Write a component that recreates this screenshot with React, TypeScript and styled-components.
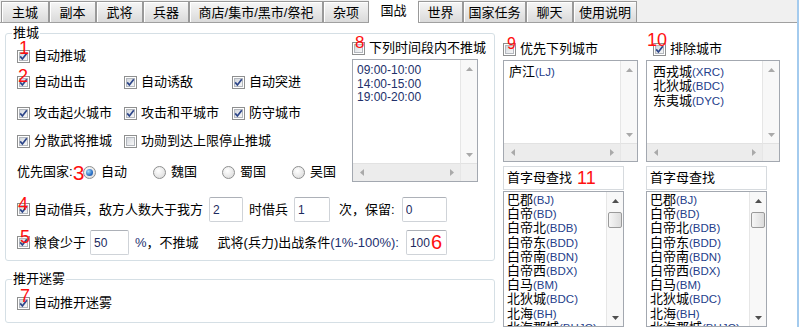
import React from "react";
import styled, { createGlobalStyle } from "styled-components";

const GlobalStyle = createGlobalStyle`
  * { box-sizing: border-box; }
  html, body { margin: 0; padding: 0; background: #fff; }
  body {
    font-family: "Liberation Sans", "Noto Sans CJK SC", sans-serif;
    font-size: 13px;
    color: #000;
  }
`;

const Window = styled.div`
  width: 799px;
  height: 327px;
  overflow: hidden;
  display: flex;
  flex-direction: column;
  border-right: 2px solid #a4cbee;
  background: #fff;
`;

const TabStrip = styled.div`
  display: flex;
  align-items: flex-start;
  flex-shrink: 0;
  height: 23px;
  padding-left: 1px;
  background: #f0f0f0;
  border-bottom: 1px solid #a0a0a0;
`;

const Tab = styled.div<{ $w: number; $active?: boolean }>`
  width: ${(p) => p.$w}px;
  flex-shrink: 0;
  text-align: center;
  line-height: 18px;
  white-space: nowrap;
  ${(p) =>
    p.$active
      ? `
    height: 23px;
    padding-top: 2px;
    background: #fff;
  `
      : `
    height: 21px;
    margin-top: 1px;
    padding-top: 2px;
    border: 1px solid #999;
    border-bottom: none;
    background: linear-gradient(#f6f6f6, #e8e8e8 50%, #dadada);
    box-shadow: inset 1px 1px 0 #fff;
  `}
`;

const Main = styled.div`
  display: flex;
  flex: 1;
  min-height: 0;
  padding-left: 5px;
  gap: 8px;
`;

const LeftCol = styled.div`
  width: 490px;
  flex-shrink: 0;
  padding-top: 2px;
  display: flex;
  flex-direction: column;
`;

const GroupBox = styled.fieldset<{ $h: number; $mt?: number }>`
  margin: ${(p) => p.$mt ?? 0}px 0 0;
  padding: 0;
  min-width: 0;
  height: ${(p) => p.$h}px;
  border: 1px solid #d5dfe5;
  border-radius: 3px;
`;

const Legend = styled.legend`
  margin-left: 6px;
  padding: 0 1px;
  line-height: 16px;
`;

const GroupInner = styled.div`
  padding-left: 11px;
`;

const TopArea = styled.div`
  display: flex;
  align-items: flex-start;
  height: 142px;
`;

const OptionsCol = styled.div`
  width: 335px;
  flex-shrink: 0;
  display: flex;
  flex-direction: column;
`;

const TimePanel = styled.div`
  display: flex;
  flex-direction: column;
`;

const Row = styled.div<{ $mt: number; $h?: number; $pl?: number }>`
  display: flex;
  align-items: center;
  height: ${(p) => p.$h ?? 16}px;
  margin-top: ${(p) => p.$mt}px;
  padding-left: ${(p) => p.$pl ?? 0}px;
  line-height: 16px;
  white-space: nowrap;
`;

const Cell = styled.div<{ $w: number }>`
  width: ${(p) => p.$w}px;
  flex-shrink: 0;
  display: flex;
  align-items: center;
`;

const Text = styled.span<{ $ml?: number }>`
  margin-left: ${(p) => p.$ml ?? 4}px;
`;

const Latin = styled.span`
  color: #1d2f6f;
`;

const BoxOuter = styled.span`
  position: relative;
  flex-shrink: 0;
  width: 13px;
  height: 13px;
  border: 1px solid #8e8f8f;
  background: #fff;
  display: inline-flex;
  align-items: center;
  justify-content: center;
`;

const BoxInner = styled.span`
  width: 9px;
  height: 9px;
  border: 1px solid #b3b7bd;
  background: linear-gradient(135deg, #d4d8de, #f7f7f7);
`;

const Tick = styled.svg`
  position: absolute;
  left: -1px;
  top: -1px;
`;

const RedMark = styled.span<{ $size: number; $float?: boolean; $x?: number; $y?: number }>`
  font-family: "Liberation Sans", sans-serif;
  color: #ff1010;
  font-size: ${(p) => p.$size}px;
  line-height: 1;
  ${(p) =>
    p.$float
      ? `position: absolute; left: ${p.$x}px; top: ${p.$y}px; z-index: 2;`
      : ""}
`;

const RadioDot = styled.span<{ $on?: boolean }>`
  flex-shrink: 0;
  width: 13px;
  height: 13px;
  border-radius: 50%;
  border: 1px solid #8e8f8f;
  background: radial-gradient(circle at 40% 35%, #fff, #d6d6d6);
  display: inline-flex;
  align-items: center;
  justify-content: center;
  &::after {
    content: "";
    display: ${(p) => (p.$on ? "block" : "none")};
    width: 7px;
    height: 7px;
    border-radius: 50%;
    background: radial-gradient(circle at 35% 35%, #a6dcfc, #2a6fc4 60%, #174a95);
  }
`;

const Field = styled.input<{ $w: number; $ml: number }>`
  width: ${(p) => p.$w}px;
  height: 25px;
  margin: 0 0 0 ${(p) => p.$ml}px;
  padding: 0 3px;
  border: 1px solid #cfd3d8;
  border-top-color: #adb1b8;
  border-radius: 2px;
  background: #fff;
  font-family: "Liberation Sans", sans-serif;
  font-size: 12px;
  color: #1c2a5e;
  outline: none;
`;

const FieldWrap = styled.span<{ $ml: number }>`
  position: relative;
  display: inline-flex;
  margin-left: ${(p) => p.$ml}px;
`;

const SideCol = styled.div<{ $w: number }>`
  width: ${(p) => p.$w}px;
  flex-shrink: 0;
  display: flex;
  flex-direction: column;
`;

const ListFrame = styled.div<{ $w: number; $h: number; $mt: number; $hs?: boolean }>`
  width: ${(p) => p.$w}px;
  height: ${(p) => p.$h}px;
  margin-top: ${(p) => p.$mt}px;
  flex-shrink: 0;
  border: 1px solid #a3a8b0;
  background: #fff;
  display: grid;
  grid-template-columns: minmax(0, 1fr) 17px;
  grid-template-rows: ${(p) => (p.$hs ? "minmax(0, 1fr) 18px" : "minmax(0, 1fr)")};
  overflow: hidden;
`;

const ListItems = styled.div<{ $pt: number; $pl: number; $lh: number }>`
  padding: ${(p) => p.$pt}px 0 0 ${(p) => p.$pl}px;
  line-height: ${(p) => p.$lh}px;
  overflow: hidden;
  white-space: nowrap;
`;

const Item = styled.div``;

const TimeItem = styled.div`
  font-size: 12px;
  color: #22306a;
`;

const Code = styled.span`
  font-size: 11.5px;
  color: #24408a;
`;

const VBar = styled.div`
  display: flex;
  flex-direction: column;
  background: #f8f8f8;
  border-left: 1px solid #e6e6e6;
`;

const ArrowBtn = styled.div<{ $wide?: boolean }>`
  flex-shrink: 0;
  width: ${(p) => (p.$wide ? "17px" : "100%")};
  height: ${(p) => (p.$wide ? "100%" : "17px")};
  display: flex;
  align-items: center;
  justify-content: center;
`;

const Track = styled.div`
  flex: 1;
  display: flex;
  justify-content: center;
`;

const Thumb = styled.div`
  width: 14px;
  height: 16px;
  margin-top: 3px;
  border: 1px solid #9a9a9a;
  border-radius: 2px;
  background: linear-gradient(to right, #f6f6f6, #dcdcdc);
`;

const HBar = styled.div`
  display: flex;
  justify-content: space-between;
  background: #ececec;
  border-top: 1px solid #e2e2e2;
`;

const Corner = styled.div`
  background: #f0f0f0;
  border-top: 1px solid #e2e2e2;
  border-left: 1px solid #e6e6e6;
`;

const SearchBox = styled.div<{ $w: number }>`
  width: ${(p) => p.$w}px;
  height: 24px;
  margin-top: 4px;
  flex-shrink: 0;
  padding-left: 3px;
  border: 1px solid #d6dade;
  display: flex;
  align-items: center;
  gap: 5px;
  line-height: 16px;
`;

type Mark = { n: string; x: number; y: number; s: number };

function Check({ on, mark }: { on?: boolean; mark?: Mark }) {
  return (
    <BoxOuter>
      <BoxInner />
      {on && (
        <Tick width="13" height="13" viewBox="0 0 13 13">
          <path d="M3.2 6.4 L5.4 9 L9.8 3.2" fill="none" stroke="#2c4589" strokeWidth="1.7" />
        </Tick>
      )}
      {mark && (
        <RedMark $size={mark.s} $float $x={mark.x} $y={mark.y}>
          {mark.n}
        </RedMark>
      )}
    </BoxOuter>
  );
}

function CheckLabel({ on, mark, children }: { on?: boolean; mark?: Mark; children: React.ReactNode }) {
  return (
    <>
      <Check on={on} mark={mark} />
      <Text>{children}</Text>
    </>
  );
}

function Arrow({ dir, dim }: { dir: "up" | "down" | "left" | "right"; dim?: boolean }) {
  const vertical = dir === "up" || dir === "down";
  const pts = {
    up: "0,4 3.5,0 7,4",
    down: "0,0 7,0 3.5,4",
    left: "4,0 4,7 0,3.5",
    right: "0,0 0,7 4,3.5",
  }[dir];
  return (
    <svg width={vertical ? 7 : 4} height={vertical ? 4 : 7} viewBox={vertical ? "0 0 7 4" : "0 0 4 7"}>
      <polygon points={pts} fill={dim ? "#a9a9a9" : "#4f4f4f"} />
    </svg>
  );
}

type ListProps = {
  w: number;
  h: number;
  mt: number;
  hs?: boolean;
  thumb?: boolean;
  dim?: boolean;
  pt: number;
  pl: number;
  lh: number;
  children: React.ReactNode;
};

function ListBox({ w, h, mt, hs, thumb, dim, pt, pl, lh, children }: ListProps) {
  return (
    <ListFrame $w={w} $h={h} $mt={mt} $hs={hs}>
      <ListItems $pt={pt} $pl={pl} $lh={lh}>
        {children}
      </ListItems>
      <VBar>
        <ArrowBtn>
          <Arrow dir="up" dim={dim} />
        </ArrowBtn>
        <Track>{thumb && <Thumb />}</Track>
        <ArrowBtn>
          <Arrow dir="down" dim={dim} />
        </ArrowBtn>
      </VBar>
      {hs && (
        <>
          <HBar>
            <ArrowBtn $wide>
              <Arrow dir="left" dim={dim} />
            </ArrowBtn>
            <ArrowBtn $wide>
              <Arrow dir="right" dim={dim} />
            </ArrowBtn>
          </HBar>
          <Corner />
        </>
      )}
    </ListFrame>
  );
}

const tabs = [
  { label: "主城", w: 48 },
  { label: "副本", w: 47 },
  { label: "武将", w: 47 },
  { label: "兵器", w: 46 },
  { label: "商店/集市/黑市/祭祀", w: 134 },
  { label: "杂项", w: 46 },
  { label: "国战", w: 49, active: true },
  { label: "世界", w: 45 },
  { label: "国家任务", w: 63 },
  { label: "聊天", w: 47 },
  { label: "使用说明", w: 64 },
];

const allCities: [string, string][] = [
  ["巴郡", "BJ"],
  ["白帝", "BD"],
  ["白帝北", "BDB"],
  ["白帝东", "BDD"],
  ["白帝南", "BDN"],
  ["白帝西", "BDX"],
  ["白马", "BM"],
  ["北狄城", "BDC"],
  ["北海", "BH"],
  ["北海郡城", "BHJC"],
];

const excluded: [string, string][] = [
  ["西戎城", "XRC"],
  ["北狄城", "BDC"],
  ["东夷城", "DYC"],
];

function CityList({ items, w, h, mt, hs, thumb, dim, pt, pl, lh }: Omit<ListProps, "children"> & { items: [string, string][] }) {
  return (
    <ListBox w={w} h={h} mt={mt} hs={hs} thumb={thumb} dim={dim} pt={pt} pl={pl} lh={lh}>
      {items.map(([name, code]) => (
        <Item key={name}>
          {name}
          <Code>({code})</Code>
        </Item>
      ))}
    </ListBox>
  );
}

export default function App() {
  return (
    <>
      <GlobalStyle />
      <Window>
        <TabStrip>
          {tabs.map((t) => (
            <Tab key={t.label} $w={t.w} $active={t.active}>
              {t.label}
            </Tab>
          ))}
        </TabStrip>

        <Main>
          <LeftCol>
            <GroupBox $h={236}>
              <Legend>推城</Legend>
              <GroupInner>
                <TopArea>
                  <OptionsCol>
                    <Row $mt={7}>
                      <CheckLabel on mark={{ n: "1", x: 1, y: -12, s: 18 }}>自动推城</CheckLabel>
                    </Row>
                    <Row $mt={10}>
                      <Cell $w={107}>
                        <CheckLabel on mark={{ n: "2", x: 0, y: -10, s: 18 }}>自动出击</CheckLabel>
                      </Cell>
                      <Cell $w={108}>
                        <CheckLabel on>自动诱敌</CheckLabel>
                      </Cell>
                      <Cell $w={100}>
                        <CheckLabel on>自动突进</CheckLabel>
                      </Cell>
                    </Row>
                    <Row $mt={15}>
                      <Cell $w={107}>
                        <CheckLabel on>攻击起火城市</CheckLabel>
                      </Cell>
                      <Cell $w={108}>
                        <CheckLabel on>攻击和平城市</CheckLabel>
                      </Cell>
                      <Cell $w={100}>
                        <CheckLabel on>防守城市</CheckLabel>
                      </Cell>
                    </Row>
                    <Row $mt={12}>
                      <Cell $w={107}>
                        <CheckLabel on>分散武将推城</CheckLabel>
                      </Cell>
                      <Cell $w={200}>
                        <CheckLabel>功勋到达上限停止推城</CheckLabel>
                      </Cell>
                    </Row>
                    <Row $mt={15}>
                      <Cell $w={66}>
                        优先国家:
                        <RedMark $size={21}>3</RedMark>
                      </Cell>
                      <Cell $w={70}>
                        <RadioDot $on />
                        <Text $ml={5}>自动</Text>
                      </Cell>
                      <Cell $w={69}>
                        <RadioDot />
                        <Text $ml={5}>魏国</Text>
                      </Cell>
                      <Cell $w={70}>
                        <RadioDot />
                        <Text $ml={5}>蜀国</Text>
                      </Cell>
                      <Cell $w={50}>
                        <RadioDot />
                        <Text $ml={5}>吴国</Text>
                      </Cell>
                    </Row>
                  </OptionsCol>

                  <TimePanel>
                    <Row $mt={-1}>
                      <CheckLabel mark={{ n: "8", x: 2, y: -9, s: 17 }}>下列时间段内不推城</CheckLabel>
                    </Row>
                    <ListBox w={126} h={123} mt={3} hs dim pt={4} pl={4} lh={13.5}>
                      <TimeItem>09:00-10:00</TimeItem>
                      <TimeItem>14:00-15:00</TimeItem>
                      <TimeItem>19:00-20:00</TimeItem>
                    </ListBox>
                  </TimePanel>
                </TopArea>

                <Row $mt={14} $h={25}>
                  <Check on mark={{ n: "4", x: 0, y: -9, s: 18 }} />
                  <Text>自动借兵，敌方人数大于我方</Text>
                  <Field $w={34} $ml={6} defaultValue="2" />
                  <Text $ml={6}>时借兵</Text>
                  <Field $w={36} $ml={6} defaultValue="1" />
                  <Text $ml={9}>次，保留:</Text>
                  <Field $w={45} $ml={7} defaultValue="0" />
                </Row>
                <Row $mt={8} $h={25}>
                  <Check on mark={{ n: "5", x: 2, y: -9, s: 18 }} />
                  <Text>粮食少于</Text>
                  <Field $w={39} $ml={4} defaultValue="50" />
                  <Text $ml={6}>
                    <Latin>%</Latin>，不推城
                  </Text>
                  <Text $ml={19}>
                    武将(兵力)出战条件<Latin>(1%-100%):</Latin>
                  </Text>
                  <FieldWrap $ml={7}>
                    <Field $w={41} $ml={0} defaultValue="100" />
                    <RedMark $size={20} $float $x={25} $y={2}>
                      6
                    </RedMark>
                  </FieldWrap>
                </Row>
              </GroupInner>
            </GroupBox>

            <GroupBox $h={52} $mt={10}>
              <Legend>推开迷雾</Legend>
              <GroupInner>
                <Row $mt={8}>
                  <CheckLabel on mark={{ n: "7", x: 2, y: -11, s: 18 }}>自动推开迷雾</CheckLabel>
                </Row>
              </GroupInner>
            </GroupBox>
          </LeftCol>

          <SideCol $w={135}>
            <Row $mt={18}>
              <CheckLabel mark={{ n: "9", x: 3, y: -8, s: 16 }}>优先下列城市</CheckLabel>
            </Row>
            <CityList items={[["庐江", "LJ"]]} w={135} h={102} mt={3} hs dim pt={4} pl={5} lh={13.3} />
            <SearchBox $w={121}>
              首字母查找
              <RedMark $size={18}>11</RedMark>
            </SearchBox>
            <CityList items={allCities} w={121} h={136} mt={1} thumb pt={1} pl={3} lh={14.2} />
          </SideCol>

          <SideCol $w={134}>
            <Row $mt={18} $pl={7}>
              <CheckLabel on mark={{ n: "10", x: -7, y: -13, s: 18 }}>排除城市</CheckLabel>
            </Row>
            <CityList items={excluded} w={134} h={102} mt={3} hs dim pt={4} pl={6} lh={13.3} />
            <SearchBox $w={121}>首字母查找</SearchBox>
            <CityList items={allCities} w={121} h={136} mt={1} thumb pt={1} pl={3} lh={14.2} />
          </SideCol>
        </Main>
      </Window>
    </>
  );
}
